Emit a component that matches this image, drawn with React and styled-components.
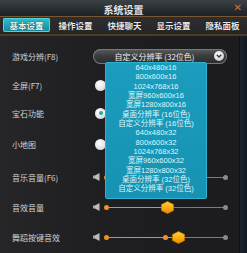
import React from "react";
import styled, { createGlobalStyle } from "styled-components";

const Global = createGlobalStyle`
  html, body { margin: 0; padding: 0; background: #1d1d1f; }
  body { width: 247px; height: 253px; overflow: hidden; }
  * { box-sizing: border-box; }
`;

const CJK = `"Noto Sans CJK SC", "Noto Sans", sans-serif`;

const Window = styled.div`
  width: 247px;
  height: 253px;
  display: flex;
  flex-direction: column;
  overflow: hidden;
  background: #202022;
  font-family: ${CJK};
`;

const TitleBar = styled.div`
  position: relative;
  height: 17px;
  display: flex;
  align-items: center;
  justify-content: center;
  background: linear-gradient(180deg, #3b4246 0%, #2a2e31 55%, #1f2224 100%);
  border-bottom: 1px solid #7a5630;
  color: #e4e4e4;
  font-size: 10px;
  font-weight: 700;
  padding-top: 2px;
`;

const Close = styled.span`
  position: absolute;
  right: 5px;
  top: 2px;
  color: #e26a32;
  font-family: "DejaVu Sans", sans-serif;
  font-size: 10px;
  font-weight: 700;
  line-height: 12px;
`;

const TabBar = styled.div`
  height: 19px;
  display: grid;
  grid-template-columns: repeat(5, 49px);
  padding: 1px 0 2px 2px;
  background: linear-gradient(180deg, #2e2e30, #262628);
  border-bottom: 2px solid #4f3a24;
`;

const Tab = styled.div`
  margin: 0 1px;
  display: flex;
  align-items: center;
  justify-content: center;
  border-radius: 2px;
  font-size: 8.5px;
  font-weight: 700;
  color: ${(p) => (p.$active ? "#e2fbff" : "#e6e6e6")};
  background: ${(p) =>
    p.$active ? "linear-gradient(180deg, #2fc0cf 0%, #1a9fb2 60%, #148b9e 100%)" : "transparent"};
  box-shadow: ${(p) => (p.$active ? "inset 0 0 0 1px #4fd3df" : "none")};
  text-shadow: 0 0 1px #000;
`;

const Body = styled.div`
  flex: 1;
  display: flex;
`;

const Panel = styled.div`
  position: relative;
  width: 240px;
  padding-top: 5px;
  display: grid;
  grid-template-rows: 30px 29px 26px 36px 30px 30px 30px;
  align-content: start;
  background: linear-gradient(90deg, #262628 0%, #1f1f21 40%, #1c1c1e 100%);
  border-right: 1px solid #101012;
`;

const SideStrip = styled.div`
  flex: 1;
  background: linear-gradient(90deg, #1a232b, #121820);
`;

const Row = styled.div`
  display: flex;
  align-items: center;
  padding-left: 12px;
`;

const Label = styled.div`
  width: 81px;
  flex: none;
  font-size: 8px;
  color: #d2d2d2;
  white-space: nowrap;
`;

const Select = styled.div`
  width: 134px;
  height: 15px;
  display: flex;
  align-items: center;
  border-radius: 8px;
  background: linear-gradient(180deg, #5a5c5e 0%, #3a3c3e 45%, #2a2b2d 100%);
  box-shadow: inset 0 0 0 1px #76797b;
  padding-right: 3px;
`;

const SelectText = styled.div`
  flex: 1;
  text-align: center;
  font-size: 8px;
  color: #f0f0f0;
  white-space: nowrap;
  padding-left: 2px;
`;

const ChevronBall = styled.div`
  width: 10px;
  height: 10px;
  border-radius: 50%;
  background: radial-gradient(circle at 40% 35%, #ffffff, #cfcfcf 70%, #9a9a9a);
  display: flex;
  align-items: center;
  justify-content: center;
`;

const List = styled.div`
  position: absolute;
  left: 105px;
  top: 26px;
  width: 102px;
  height: 137px;
  padding: 0 0 4px;
  background: linear-gradient(180deg, #1b9dbd 0%, #1792b3 100%);
  border: 1px solid #2db3d1;
  border-radius: 2px;
  display: flex;
  flex-direction: column;
  align-items: center;
`;

const ListItem = styled.div`
  height: 9.33px;
  line-height: 9.33px;
  font-family: "Liberation Sans", "Noto Sans CJK SC", sans-serif;
  font-size: 7.5px;
  color: #dff6fb;
  white-space: nowrap;
`;

const Radio = styled.div`
  width: 11px;
  height: 11px;
  margin-left: 2px;
  border-radius: 50%;
  background: radial-gradient(circle at 40% 35%, #ffffff, #e2e2e2 60%, #a8a8a8);
  display: flex;
  align-items: center;
  justify-content: center;
`;

const RadioDot = styled.div`
  width: 4px;
  height: 4px;
  border-radius: 50%;
  background: #2aa6a0;
`;

const SliderWrap = styled.div`
  display: flex;
  align-items: center;
  gap: 1px;
`;

const Track = styled.div`
  position: relative;
  width: 128px;
  height: 13px;
`;

const Line = styled.div`
  position: absolute;
  top: 6px;
  height: 1.5px;
  background: ${(p) => (p.$on ? "#e88d1e" : "#7c7c7c")};
`;

const Dot = styled.div`
  position: absolute;
  top: 6.75px;
  width: 5px;
  height: 5px;
  margin: -2.5px 0 0 -2.5px;
  border-radius: 50%;
  background: ${(p) => (p.$on ? "#ee9322" : "#8a8a8a")};
`;

const Thumb = styled.svg`
  position: absolute;
  top: 0;
  margin-left: -6.5px;
`;

const TRACK_START = 5;
const TRACK_END = 124;

function Speaker() {
  return (
    <svg width="7" height="8" viewBox="0 0 7 8">
      <rect x="0" y="2.5" width="2.5" height="3" fill="#a9a9a9" />
      <polygon points="2,2.5 6.5,0 6.5,8 2,5.5" fill="#bdbdbd" />
    </svg>
  );
}

function Hex() {
  return (
    <>
      <defs>
        <linearGradient id="hexg" x1="0" y1="0" x2="0" y2="1">
          <stop offset="0" stopColor="#ffd23a" />
          <stop offset="0.6" stopColor="#f7a80c" />
          <stop offset="1" stopColor="#e88a00" />
        </linearGradient>
      </defs>
      <polygon
        points="6.5,0.5 12.5,3.5 12.5,9.5 6.5,12.5 0.5,9.5 0.5,3.5"
        fill="url(#hexg)"
        stroke="#c97a00"
        strokeWidth="0.8"
      />
    </>
  );
}

function Slider({ value, marker }) {
  const x = TRACK_START + ((TRACK_END - TRACK_START) * value) / 100;
  const mx = marker != null ? TRACK_START + ((TRACK_END - TRACK_START) * marker) / 100 : null;
  return (
    <SliderWrap>
      <Speaker />
      <Track>
        <Line $on style={{ left: TRACK_START, width: x - TRACK_START }} />
        <Line style={{ left: x, width: TRACK_END - x }} />
        <Dot $on style={{ left: TRACK_START }} />
        <Dot style={{ left: TRACK_END }} />
        {mx != null && <Dot $on style={{ left: mx }} />}
        <Thumb width="13" height="13" viewBox="0 0 13 13" style={{ left: x }}>
          <Hex />
        </Thumb>
      </Track>
    </SliderWrap>
  );
}

const tabs = ["基本设置", "操作设置", "快捷聊天", "显示设置", "隐私面板"];

const modes = [
  "640x480x16",
  "800x600x16",
  "1024x768x16",
  "宽屏960x600x16",
  "宽屏1280x800x16",
  "桌面分辨率 (16位色)",
  "自定义分辨率 (16位色)",
  "640x480x32",
  "800x600x32",
  "1024x768x32",
  "宽屏960x600x32",
  "宽屏1280x800x32",
  "桌面分辨率 (32位色)",
  "自定义分辨率 (32位色)",
];

export default function App() {
  return (
    <>
      <Global />
      <Window>
        <TitleBar>
          系统设置
          <Close>✕</Close>
        </TitleBar>
        <TabBar>
          {tabs.map((t, i) => (
            <Tab key={t} $active={i === 0}>
              {t}
            </Tab>
          ))}
        </TabBar>
        <Body>
          <Panel>
            <Row>
              <Label>游戏分辨(F8)</Label>
              <Select>
                <SelectText>自定义分辨率 (32位色)</SelectText>
                <ChevronBall>
                  <svg width="6" height="4" viewBox="0 0 6 4">
                    <polyline points="0.8,0.8 3,3 5.2,0.8" fill="none" stroke="#333" strokeWidth="1.3" />
                  </svg>
                </ChevronBall>
              </Select>
            </Row>
            <Row>
              <Label>全屏(F7)</Label>
              <Radio />
            </Row>
            <Row>
              <Label>宝石功能</Label>
              <Radio>
                <RadioDot />
              </Radio>
            </Row>
            <Row>
              <Label>小地图</Label>
              <Radio />
            </Row>
            <Row>
              <Label>音乐音量(F6)</Label>
              <Slider value={6} />
            </Row>
            <Row>
              <Label>音效音量</Label>
              <Slider value={52} />
            </Row>
            <Row>
              <Label>舞蹈按键音效</Label>
              <Slider value={61} marker={50} />
            </Row>
            <List>
              {modes.map((m) => (
                <ListItem key={m}>{m}</ListItem>
              ))}
            </List>
          </Panel>
          <SideStrip />
        </Body>
      </Window>
    </>
  );
}
